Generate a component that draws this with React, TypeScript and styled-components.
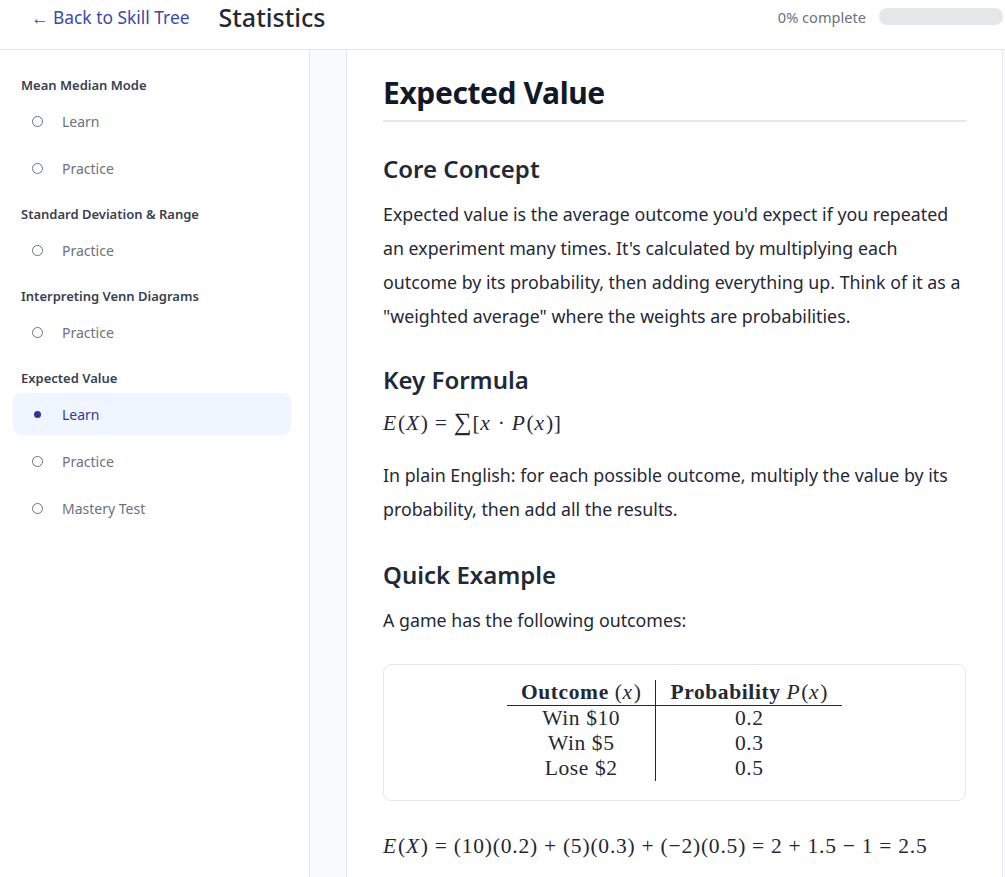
import * as React from "react";
import styled, { createGlobalStyle } from "styled-components";

const GlobalStyle = createGlobalStyle`
  html, body {
    margin: 0;
    padding: 0;
    background: #ffffff;
    font-family: "Noto Sans", "Open Sans", sans-serif;
    color: #1f2937;
  }
  * { box-sizing: border-box; }
`;

const Page = styled.div`
  display: flex;
  flex-direction: column;
  height: 877px;
  overflow: hidden;
`;

const Header = styled.header`
  display: flex;
  align-items: center;
  height: 50px;
  padding: 0 2px 16px 31px;
  border-bottom: 1px solid #e5e7eb;
  flex-shrink: 0;
`;

const BackLink = styled.a`
  color: #3949ab;
  font-size: 17.4px;
  text-decoration: none;
  margin-right: 29px;
`;

const Title = styled.h1`
  margin: 0;
  font-size: 25px;
  font-weight: 500;
  color: #1f2937;
`;

const Spacer = styled.div`
  flex: 1;
`;

const ProgressLabel = styled.span`
  font-size: 14.6px;
  color: #6b7280;
  margin-right: 13px;
`;

const ProgressTrack = styled.div`
  width: 124px;
  height: 17px;
  border-radius: 8px;
  background: #e5e7eb;
  overflow: hidden;
`;

const ProgressFill = styled.div`
  height: 100%;
  background: #4f46e5;
`;

const Body = styled.div`
  display: flex;
  flex: 1;
  min-height: 0;
`;

const Sidebar = styled.nav`
  width: 310px;
  flex-shrink: 0;
  border-right: 1px solid #e5e7eb;
  padding: 26px 18px 0 13px;
`;

const SectionTitle = styled.div`
  font-size: 13px;
  font-weight: 600;
  color: #374151;
  padding-left: 8px;
  height: 18px;
  line-height: 18px;
  margin-bottom: 6px;
`;

const Section = styled.div`
  margin-bottom: 16px;
`;

const Item = styled.div<{ $active?: boolean }>`
  display: flex;
  align-items: center;
  height: 42px;
  margin-bottom: 5px;
  padding-left: 19px;
  border-radius: 8px;
  font-size: 14px;
  background: ${(p) => (p.$active ? "#eff6ff" : "transparent")};
  color: ${(p) => (p.$active ? "#3338a0" : "#6b7280")};
  &:last-child {
    margin-bottom: 0;
  }
`;

const Dot = styled.span<{ $active?: boolean }>`
  width: 11px;
  height: 11px;
  border-radius: 50%;
  margin-right: 19px;
  display: flex;
  align-items: center;
  justify-content: center;
  border: ${(p) => (p.$active ? "none" : "1.3px solid #6b7280")};
  &::after {
    content: "";
    display: ${(p) => (p.$active ? "block" : "none")};
    width: 7px;
    height: 7px;
    border-radius: 50%;
    background: #2e35a0;
  }
`;

const Main = styled.main`
  flex: 1;
  background: #f9fafb;
  padding: 0 2px 0 36px;
  min-width: 0;
`;

const Card = styled.article`
  background: #ffffff;
  border-left: 1px solid #e5e7eb;
  border-right: 1px solid #e5e7eb;
  height: 100%;
  padding: 24px 36px 0 36px;
`;

const PageHeading = styled.h1`
  margin: 0 0 31px;
  font-size: 30px;
  font-weight: 700;
  letter-spacing: -0.4px;
  color: #111827;
  padding-bottom: 8px;
  border-bottom: 2px solid #e5e7eb;
  line-height: 38px;
`;

const SubHeading = styled.h2`
  margin: 0 0 12px;
  font-size: 24px;
  font-weight: 600;
  color: #1f2937;
  line-height: 32px;
`;

const Para = styled.p<{ $gap?: number }>`
  margin: 0 0 ${(p) => (p.$gap ?? 31)}px;
  font-size: 17.8px;
  line-height: 34px;
  color: #1f2937;
`;

const Math = styled.div`
  font-family: "Liberation Serif", "DejaVu Serif", serif;
  font-size: 21.5px;
  letter-spacing: 0.8px;
  color: #1f2937;
  line-height: 28px;
  white-space: nowrap;
`;

const FormulaBlock = styled(Math)`
  margin: 10px 0 21px;
`;

const Sum = styled.span`
  font-size: 25px;
`;

const V = styled.i`
  font-style: italic;
  padding-right: 1px;
`;

const Op = styled.span`
  padding: 0 6px;
`;

const TableBox = styled.div`
  border: 1px solid #e5e7eb;
  border-radius: 8px;
  padding: 15px 0 19px;
  display: flex;
  justify-content: center;
  margin: 27px 0 31px;
`;

const MathTable = styled.table`
  font-family: "Liberation Serif", "DejaVu Serif", serif;
  font-size: 21.5px;
  letter-spacing: 0.6px;
  border-collapse: collapse;
  color: #1f2937;
`;

const Th = styled.th<{ $first?: boolean }>`
  font-weight: 700;
  padding: 0 14px;
  line-height: 25px;
  border-bottom: 1.5px solid #1f2937;
  border-right: ${(p) => (p.$first ? "1px solid #1f2937" : "none")};
  white-space: nowrap;
`;

const Td = styled.td<{ $first?: boolean }>`
  text-align: center;
  padding: 0 14px;
  line-height: 25px;
  border-right: ${(p) => (p.$first ? "1px solid #1f2937" : "none")};
`;

const Plain = styled.span`
  font-weight: 400;
`;

const sections = [
  { title: "Mean Median Mode", items: ["Learn", "Practice"] },
  { title: "Standard Deviation & Range", items: ["Practice"] },
  { title: "Interpreting Venn Diagrams", items: ["Practice"] },
  { title: "Expected Value", items: ["Learn", "Practice", "Mastery Test"] },
];

const rows = [
  ["Win $10", "0.2"],
  ["Win $5", "0.3"],
  ["Lose $2", "0.5"],
];

export default function App() {
  const progress = 0;
  return (
    <Page>
      <GlobalStyle />
      <Header>
        <BackLink href="#">← Back to Skill Tree</BackLink>
        <Title>Statistics</Title>
        <Spacer />
        <ProgressLabel>{progress}% complete</ProgressLabel>
        <ProgressTrack>
          <ProgressFill style={{ width: `${progress}%` }} />
        </ProgressTrack>
      </Header>
      <Body>
        <Sidebar>
          {sections.map((s) => (
            <Section key={s.title}>
              <SectionTitle>{s.title}</SectionTitle>
              {s.items.map((it) => {
                const active = s.title === "Expected Value" && it === "Learn";
                return (
                  <Item key={it} $active={active}>
                    <Dot $active={active} />
                    {it}
                  </Item>
                );
              })}
            </Section>
          ))}
        </Sidebar>
        <Main>
          <Card>
            <PageHeading>Expected Value</PageHeading>
            <SubHeading>Core Concept</SubHeading>
            <Para>
              Expected value is the average outcome you'd expect if you repeated
              an experiment many times. It's calculated by multiplying each
              outcome by its probability, then adding everything up. Think of it
              as a "weighted average" where the weights are probabilities.
            </Para>
            <SubHeading>Key Formula</SubHeading>
            <FormulaBlock>
              <V>E</V>(<V>X</V>)<Op>=</Op>
              <Sum>∑</Sum>[<V>x</V>
              <Op>·</Op>
              <V>P</V>(<V>x</V>)]
            </FormulaBlock>
            <Para $gap={33}>
              In plain English: for each possible outcome, multiply the value by
              its probability, then add all the results.
            </Para>
            <SubHeading>Quick Example</SubHeading>
            <Para $gap={0}>A game has the following outcomes:</Para>
            <TableBox>
              <MathTable>
                <thead>
                  <tr>
                    <Th $first>
                      Outcome{" "}
                      <Plain>
                        (<V>x</V>)
                      </Plain>
                    </Th>
                    <Th>
                      Probability{" "}
                      <Plain>
                        <V>P</V>(<V>x</V>)
                      </Plain>
                    </Th>
                  </tr>
                </thead>
                <tbody>
                  {rows.map((r) => (
                    <tr key={r[0]}>
                      <Td $first>{r[0]}</Td>
                      <Td>{r[1]}</Td>
                    </tr>
                  ))}
                </tbody>
              </MathTable>
            </TableBox>
            <Math>
              <V>E</V>(<V>X</V>)<Op>=</Op>(10)(0.2)<Op>+</Op>(5)(0.3)<Op>+</Op>
              (−2)(0.5)<Op>=</Op>2<Op>+</Op>1.5<Op>−</Op>1<Op>=</Op>2.5
            </Math>
          </Card>
        </Main>
      </Body>
    </Page>
  );
}
